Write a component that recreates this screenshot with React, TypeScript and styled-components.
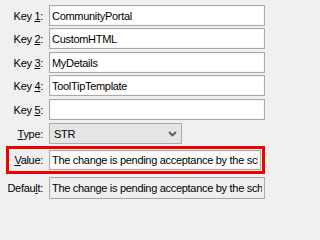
import styled, { createGlobalStyle } from 'styled-components';

const GlobalStyle = createGlobalStyle`
  html, body {
    margin: 0;
    padding: 0;
    background: #f0f0f0;
  }
  body {
    font-family: "Liberation Sans", Arial, sans-serif;
  }
`;

const font = `
  font-family: "Liberation Sans", Arial, sans-serif;
  font-size: 11px;
  letter-spacing: -0.3px;
  color: #000;
`;

const Form = styled.div`
  display: flex;
  flex-direction: column;
  width: 266px;
  height: 202px;
  padding: 5px 1px 0 0;
  box-sizing: border-box;
  overflow: hidden;
`;

const Row = styled.div<{ $gap: number }>`
  display: grid;
  grid-template-columns: 43px 1fr;
  column-gap: 6px;
  align-items: center;
  margin-bottom: ${(p) => p.$gap}px;
`;

const HighlightRow = styled.div<{ $gap: number }>`
  display: grid;
  grid-template-columns: 34px 1fr;
  column-gap: 6px;
  align-items: start;
  margin-left: 6px;
  margin-bottom: ${(p) => p.$gap}px;
  height: 28px;
  box-sizing: border-box;
  border: 3px solid #f20000;
  padding: 1px 1px 0 0;
`;

const Label = styled.label`
  ${font}
  text-align: right;
  white-space: nowrap;
  line-height: 20px;

  u {
    text-decoration: underline;
    text-underline-offset: 1px;
  }
`;

const TextBox = styled.input<{ $h?: number; $muted?: boolean }>`
  ${font}
  display: block;
  width: 100%;
  height: ${(p) => p.$h ?? 21}px;
  box-sizing: border-box;
  margin: 0;
  padding: 0 2px;
  border: 1px solid #a9a9a9;
  box-shadow: inset 0 0 0 1px ${(p) => (p.$muted ? '#ececec' : '#f6f6f6')};
  background: ${(p) => (p.$muted ? '#f0f0f0' : '#fff')};
  outline: none;
`;

const Combo = styled.div`
  ${font}
  width: 133px;
  height: 21px;
  box-sizing: border-box;
  display: flex;
  align-items: center;
  justify-content: space-between;
  padding: 0 4px 0 4px;
  border: 1px solid #acacac;
  background: #e5e5e5;
`;

const Chevron = () => (
  <svg width="9" height="6" viewBox="0 0 9 6">
    <path d="M1 1 L4.5 4.5 L8 1" fill="none" stroke="#5a5a5a" strokeWidth="1.8" />
  </svg>
);

const keys = [
  { n: '1', v: 'CommunityPortal', gap: 2 },
  { n: '2', v: 'CustomHTML', gap: 3 },
  { n: '3', v: 'MyDetails', gap: 2 },
  { n: '4', v: 'ToolTipTemplate', gap: 3 },
  { n: '5', v: '', gap: 3 },
];

const text = 'The change is pending acceptance by the schedule owner';

export default function App() {
  return (
    <>
      <GlobalStyle />
      <Form>
        {keys.map((k) => (
          <Row key={k.n} $gap={k.gap}>
            <Label>
              Key <u>{k.n}</u>:
            </Label>
            <TextBox readOnly value={k.v} />
          </Row>
        ))}
        <Row $gap={2}>
          <Label>
            <u>T</u>ype:
          </Label>
          <Combo>
            <span>STR</span>
            <Chevron />
          </Combo>
        </Row>
        <HighlightRow $gap={3}>
          <Label>
            <u>V</u>alue:
          </Label>
          <TextBox readOnly value={text} $h={20} />
        </HighlightRow>
        <Row $gap={0}>
          <Label>
            Defau<u>l</u>t:
          </Label>
          <TextBox readOnly value={text} $h={22} $muted />
        </Row>
      </Form>
    </>
  );
}
